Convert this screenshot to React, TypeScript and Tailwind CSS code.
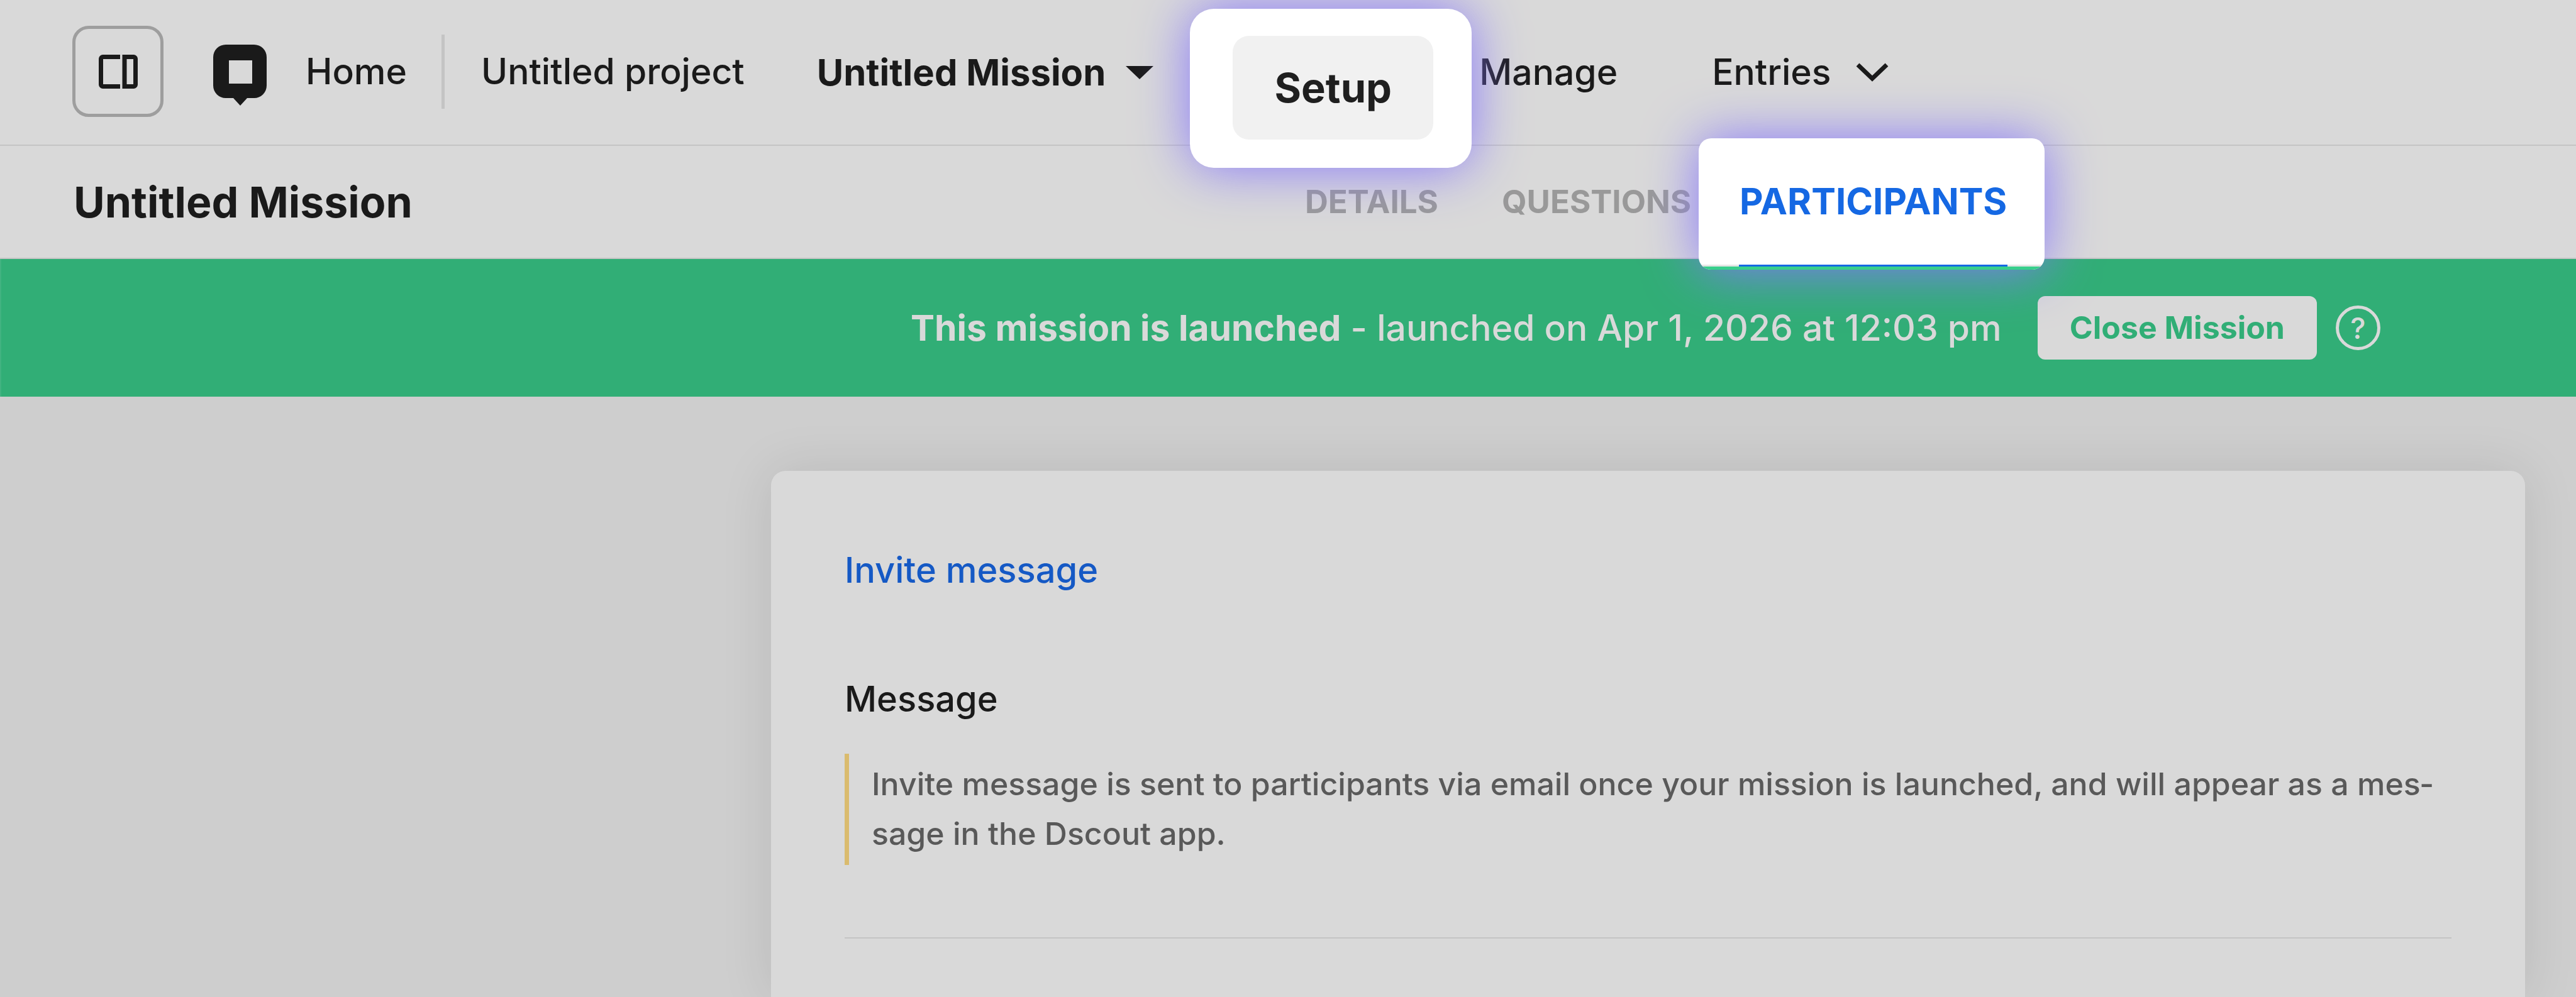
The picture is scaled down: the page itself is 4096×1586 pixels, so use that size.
import React from 'react';

const PanelIcon = () => (
  <svg width="62" height="54" viewBox="0 0 62 54" fill="none" stroke="#1a1a1a" strokeWidth="7">
    <path d="M34 3.5H6.5a3 3 0 0 0-3 3v41a3 3 0 0 0 3 3H34" />
    <path d="M41 3.5h14.500a3 3 0 0 1 3 3v41a3 3 0 0 1-3 3H41Z" />
  </svg>
);

const Logo = () => (
  <svg width="85" height="97" viewBox="0 0 85 97" fill="#1a1a1a">
    <path fillRule="evenodd" d="M20 0h45a20 20 0 0 1 20 20v45a20 20 0 0 1-20 20H54L43 97 32 85H20A20 20 0 0 1 0 65V20A20 20 0 0 1 20 0Zm5 25v37h37V25Z" />
  </svg>
);

const Caret = () => (
  <svg width="44" height="21" viewBox="0 0 44 21" fill="#1a1a1a">
    <path d="M0 0h44L22 21Z" />
  </svg>
);

const Chevron = () => (
  <svg width="52" height="30" viewBox="0 0 52 30" fill="none" stroke="#1a1a1a" strokeWidth="7">
    <path d="M3 3l23 22L49 3" />
  </svg>
);

const Header = () => (
  <header className="flex h-[232px] items-center border-b-2 border-[#c4c4c4] pl-[115px] text-[57px] leading-[70px] font-medium">
    <div className="flex items-center pb-[3px]">
      <button aria-label="Toggle panel" className="flex h-[145px] w-[145px] items-center justify-center rounded-[26px] border-5 border-[#9e9e9e]">
        <PanelIcon />
      </button>
      <a href="#home" aria-label="Dashboard" className="ml-[79px] pt-[11px]">
        <Logo />
      </a>
      <a href="#home" className="ml-[62px]">Home</a>
      <span className="ml-[55px] h-[118px] w-[5px] bg-[#c4c4c4]" />
      <a href="#project" className="ml-[58px]">Untitled project</a>
    </div>
    <button className="ml-[115px] flex items-center gap-[32px] text-[58px] font-bold">
      Untitled Mission
      <Caret />
    </button>
    <nav className="flex items-center self-stretch">
      <div className="relative ml-[58px] w-[448px] self-stretch">
        <div className="absolute top-[14px] left-0 z-20 flex h-[253px] w-full rounded-[38px] bg-white pt-[43px] pl-[68px] shadow-[0_0_84px_#8777fb]">
          <button className="h-[165px] w-[319px] rounded-[26px] bg-[#f1f1f1] text-[65px] font-bold text-[#1f1f1f]">
            Setup
          </button>
        </div>
      </div>
      <a href="#manage" className="ml-[12px]">Manage</a>
      <button className="ml-[150px] flex items-center gap-[39px]">
        Entries
        <Chevron />
      </button>
    </nav>
  </header>
);

const MissionTabs = () => (
  <div className="grid h-[180px] grid-cols-2 border-b-2 border-[#c4c4c4]">
    <h1 className="self-center pl-[117px] text-[68px] font-bold">Untitled Mission</h1>
    <nav className="flex items-center pl-[27px] text-[51px] font-bold text-[#999999]">
      <a href="#details">DETAILS</a>
      <a href="#questions" className="ml-[101px]">QUESTIONS</a>
      <div className="relative ml-[12px] w-[550px] self-stretch">
        <div className="absolute -top-[12px] left-0 z-20 w-full overflow-hidden rounded-[20px] bg-white shadow-[0_0_84px_#8777fb]">
          <a href="#participants" className="flex h-[201px] items-center justify-center pl-[5px] text-[58px] text-[#1568e3]">
            PARTICIPANTS
          </a>
          <div className="h-[3px] bg-[#e5e5e5] pr-[59px] pl-[64px]">
            <div className="h-full bg-[#1568e3]" />
          </div>
          <div className="h-[5px] bg-[#38cf8c]" />
        </div>
      </div>
    </nav>
  </div>
);

const LaunchBanner = () => (
  <div className="flex h-[219px] items-center justify-end border-l-2 border-[#41b381] bg-[#31ae76] pr-[311px] text-[57px] text-[#d9d9d9]">
    <p className="font-medium">
      <strong className="font-bold">This mission is launched</strong> - launched on Apr 1, 2026 at 12:03 pm
    </p>
    <button className="ml-[57px] h-[101px] rounded-[12px] bg-[#d9d9d9] px-[51px] text-[50px] font-bold text-[#31ae76]">
      Close Mission
    </button>
    <button aria-label="Help" className="ml-[30px] flex h-[71px] w-[71px] items-center justify-center rounded-full border-5 border-[#d9d9d9] text-[46px] leading-none font-medium">
      ?
    </button>
  </div>
);

const InviteCard = () => (
  <main className="flex flex-1 flex-col overflow-hidden bg-[#cecece] pt-[118px] pr-[81px] pl-[1226px]">
    <section className="flex-1 rounded-t-[23px] bg-[#d9d9d9] px-[117px] pt-[123px] pb-[90px] font-medium shadow-[0_0_84px_rgba(0,0,0,0.1)]">
      <a href="#invite" className="block text-[56px] leading-[70px] text-[#1559c5]">Invite message</a>
      <h2 className="mt-[135px] text-[56px] leading-[70px]">Message</h2>
      <p className="mt-[52px] border-l-7 border-[#dabb6e] pt-[9px] pb-[10px] pl-[36px] text-[50px] leading-[79px] text-[#595959]">
        Invite message is sent to participants via email once your mission is launched, and will appear as a mes&shy;sage in the Dscout app.
      </p>
      <hr className="mt-[115px] border-t-2 border-[#c4c4c4]" />
    </section>
  </main>
);

const App: React.FC = () => {
  return (
    <div className="flex min-h-screen flex-col bg-[#d9d9d9] font-['Inter',sans-serif] text-[#1a1a1a]">
      <Header />
      <MissionTabs />
      <LaunchBanner />
      <InviteCard />
    </div>
  );
};

export default App;
